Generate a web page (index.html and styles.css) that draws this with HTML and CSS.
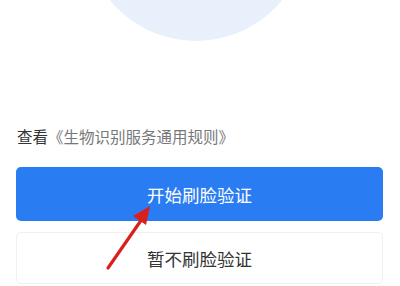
FILE: index.html
```html
<!DOCTYPE html>
<html lang="zh">
<head>
<meta charset="utf-8">
<link rel="stylesheet" href="styles.css">
</head>
<body>
<div class="page">
  <div class="hero"><div class="circle"></div></div>
  <p class="rules"><span class="rules-lead">查看</span><span class="rules-link">《生物识别服务通用规则》</span></p>
  <div class="actions">
    <button class="btn btn-primary">开始刷脸验证</button>
    <button class="btn btn-secondary">暂不刷脸验证</button>
  </div>
  <svg class="arrow" width="400" height="286" viewBox="0 0 400 286">
    <line x1="108" y1="268" x2="142" y2="219" stroke="#d9201f" stroke-width="3.2" stroke-linecap="round"/>
    <polygon points="150,206 133,216 146,225" fill="#d9201f"/>
  </svg>
</div>
</body>
</html>
```
FILE: styles.css
```css
html, body {
  margin: 0;
  padding: 0;
  background: #ffffff;
}
.page {
  position: relative;
  width: 400px;
  height: 286px;
  overflow: hidden;
  font-family: "Noto Sans CJK SC", "Noto Sans", sans-serif;
}
.hero {
  height: 41px;
  overflow: hidden;
}
.circle {
  width: 222px;
  height: 222px;
  border-radius: 50%;
  background: #e7f0fb;
  margin: -181px 0 0 85px;
}
.rules {
  margin: 85px 0 0 17px;
  font-size: 15.5px;
  line-height: 20px;
  height: 20px;
  white-space: nowrap;
}
.rules-lead {
  color: #333333;
}
.rules-link {
  color: #777777;
}
.actions {
  display: flex;
  flex-direction: column;
  gap: 11px;
  margin: 21px 17px 0 16px;
}
.btn {
  display: flex;
  align-items: center;
  justify-content: center;
  font-family: "Noto Sans CJK SC", "Noto Sans", sans-serif;
  font-size: 17.5px;
  border-radius: 5px;
  padding: 0;
  cursor: pointer;
}
.btn-primary {
  height: 54px;
  background: #2a7cf3;
  color: #ffffff;
  border: none;
}
.btn-secondary {
  height: 52px;
  background: #ffffff;
  color: #333333;
  border: 1px solid #f0f0f0;
}
.arrow {
  position: absolute;
  left: 0;
  top: 0;
  pointer-events: none;
}
```
